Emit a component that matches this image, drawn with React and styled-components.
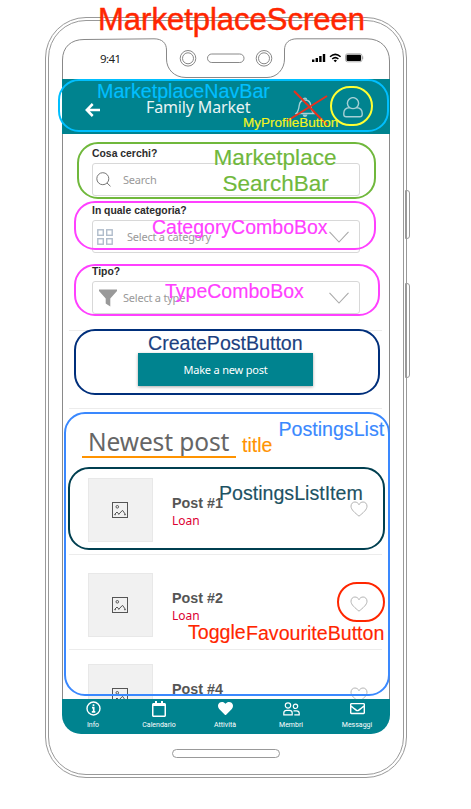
import React from "react";
import styled, { createGlobalStyle } from "styled-components";
import { FaHeart, FaRegCalendar, FaRegEnvelope } from "react-icons/fa";

const TEAL = "#00838f";
const UI = `"Noto Sans", "Open Sans", sans-serif`;
const ARIAL = `"Liberation Sans", Arial, sans-serif`;

const GlobalStyle = createGlobalStyle`
  *, *::before, *::after { box-sizing: border-box; }
  body { margin: 0; background: #fff; font-family: ${UI}; }
  svg { display: block; }
`;

const Page = styled.div`
  position: relative;
  width: 471px;
  height: 809px;
  overflow: hidden;
  padding: 17px 0 0 45px;
`;

const Phone = styled.div`
  position: relative;
  width: 362px;
  height: 761px;
  border: 1px solid #999;
  border-radius: 41px;
  padding: 2px;
`;

const Bezel = styled.div`
  height: 100%;
  border: 1px solid #999;
  border-radius: 38px;
  padding: 17px 0 0 13px;
`;

const SideKey = styled.div`
  position: absolute;
  left: 359px;
  top: ${(p) => p.$top}px;
  width: 5px;
  height: ${(p) => p.$height}px;
  border: 1px solid #999;
  border-radius: 0 3px 3px 0;
`;

const Screen = styled.div`
  width: 328px;
  height: 696px;
  display: flex;
  flex-direction: column;
`;

const StatusBar = styled.div`
  position: relative;
  height: 41px;
  flex: none;
  display: flex;
  justify-content: space-between;
  padding: 14px 26px 0 38px;
`;

const StatusOutline = styled.svg`
  position: absolute;
  left: 0;
  top: 0;
`;

const Clock = styled.span`
  font-size: 11.5px;
  line-height: 14px;
  letter-spacing: -0.6px;
  color: #222;
`;

const StatusIcons = styled.svg`
  margin-top: 1px;
`;

const NavBar = styled.header`
  height: 55px;
  flex: none;
  background: ${TEAL};
  display: flex;
  align-items: center;
  padding: 1px 27px 0 23px;
  color: #fff;
`;

const BackArrow = styled.svg`
  margin-top: 5px;
`;

const NavTitle = styled.h1`
  flex: 1;
  margin: 0 0 0 46px;
  font-size: 16px;
  line-height: 22px;
  font-weight: 400;
  letter-spacing: -0.15px;
  color: #e8f4f5;
`;

const NavActions = styled.div`
  display: flex;
  gap: 28px;
  color: #a5d0d5;
`;

const Content = styled.main`
  height: 565px;
  flex: none;
  overflow: hidden;
  border: solid #8a8a8a;
  border-width: 0 1px;
  padding: 0 7px 0 6px;
`;

const Filters = styled.section`
  height: 196px;
  padding: 14px 22px 0 23px;
`;

const Field = styled.div`
  margin-bottom: ${(p) => p.$gap || 0}px;
`;

const FieldLabel = styled.label`
  display: block;
  font: 700 10.4px/12px ${ARIAL};
  color: #2c2c2c;
  margin-bottom: 3px;
`;

const FieldBox = styled.div`
  height: 33px;
  border: 1px solid #d8d8d8;
  border-radius: 3px;
  display: flex;
  align-items: center;
  padding: 0 10px 0 ${(p) => p.$pad}px;
  gap: ${(p) => p.$gap}px;
  font-size: 11px;
  color: #999;
`;

const Placeholder = styled.span`
  flex: 1;
  line-height: 16px;
  letter-spacing: -0.22px;
`;

const CreateSection = styled.section`
  height: 79px;
  border: solid #ececec;
  border-width: 1px 0;
  padding: 22px 0 0 69px;
`;

const PrimaryButton = styled.button`
  display: block;
  width: 175px;
  height: 33px;
  padding: 0;
  border: 0;
  background: ${TEAL};
  color: #fff;
  font: 400 11px/33px ${UI};
  letter-spacing: -0.2px;
  box-shadow: 0 1px 3px rgba(0, 0, 0, 0.35);
`;

const ListTitle = styled.h2`
  height: 51px;
  margin: 0;
  padding: 16px 0 0 19px;
  font-size: 24.5px;
  line-height: 34px;
  font-weight: 400;
  letter-spacing: -0.1px;
  color: #666;
`;

const Item = styled.article`
  height: ${(p) => p.$height}px;
  border-bottom: 1px solid #ececec;
  padding: ${(p) => p.$top}px 14px 0 19px;
  display: flex;
`;

const Thumb = styled.div`
  width: 65px;
  height: 64px;
  background: #f1f1f1;
  border: 1px solid #e8e8e8;
  display: flex;
  align-items: center;
  justify-content: center;
  padding-right: 1px;
`;

const ItemText = styled.div`
  flex: 1;
  padding: 16px 0 0 19px;
`;

const ItemName = styled.div`
  font: 700 14.3px/18px ${ARIAL};
  color: #555;
`;

const ItemKind = styled.div`
  margin-top: 1px;
  font-size: 12px;
  line-height: 16px;
  color: #dc0032;
`;

const HeartSlot = styled.div`
  padding-top: 23px;
`;

const TabBar = styled.nav`
  height: 35px;
  flex: none;
  background: ${TEAL};
  border-radius: 0 0 19px 19px;
  display: grid;
  grid-template-columns: repeat(5, 62px);
  column-gap: 4px;
  color: #fff;
`;

const Tab = styled.div`
  display: flex;
  flex-direction: column;
  align-items: center;
  font: 400 7px/9px Roboto, sans-serif;
`;

const TabIcon = styled.div`
  height: 19px;
  margin-bottom: 3px;
  display: flex;
  align-items: center;
`;

const HomeBar = styled.div`
  width: 108px;
  height: 9px;
  margin: 15px 0 0 110px;
  border: 1px solid #999;
  border-radius: 5px;
`;

const Outline = styled.div`
  position: absolute;
  left: ${(p) => p.$x}px;
  top: ${(p) => p.$y}px;
  width: ${(p) => p.$w}px;
  height: ${(p) => p.$h}px;
  border: 2px solid ${(p) => p.$color};
  border-radius: 21px;
`;

const Note = styled.div`
  position: absolute;
  left: ${(p) => p.$x}px;
  top: ${(p) => p.$base - 30}px;
  font: 400 ${(p) => p.$size || 19.6}px/40px ${ARIAL};
  height: 40px;
  margin-top: ${(p) => 10 - (p.$size || 19.6) * 0.33}px;
  white-space: nowrap;
  color: ${(p) => p.$color};
  -webkit-text-stroke: ${(p) => (p.$size > 30 ? 0.5 : 0.15)}px ${(p) => p.$color};
`;

const Underline = styled.div`
  position: absolute;
  left: 82px;
  top: 456px;
  width: 154px;
  height: 2px;
  background: #ff9300;
`;

const Cross = styled.svg`
  position: absolute;
  left: 284px;
  top: 88px;
`;

const Chevron = () => (
  <svg width="20" height="12" viewBox="0 0 20 12" fill="none" stroke="#aaa" strokeWidth="1.1">
    <path d="M.5 .8 10 11 19.5 .8" />
  </svg>
);

const HeartOutline = () => (
  <svg width="18" height="16" viewBox="0 0 18 16" fill="none" stroke="#aaa" strokeWidth="0.9">
    <path d="M9 15.2C5 11.8 1 8.8 1 5.2 1 2.7 2.8 1 4.9 1 6.7 1 8.2 2 9 3.7 9.8 2 11.3 1 13.1 1 15.2 1 17 2.7 17 5.2 17 8.8 13 11.8 9 15.2Z" />
  </svg>
);

const PictureIcon = () => (
  <svg width="16" height="16" viewBox="0 0 16 16" fill="none" stroke="#555" strokeWidth="1">
    <rect x=".5" y=".5" width="15" height="15" />
    <circle cx="5.3" cy="4.8" r="1.3" />
    <path d="M2.5 12.5 5 10 7 12.3M6.5 12.5 10.5 8.3 13.5 12.5M2.5 12.7H4M12 12.7H13.7" />
  </svg>
);

const InfoIcon = () => (
  <svg width="15" height="15" viewBox="0 0 15 15" fill="none" stroke="#fff" strokeWidth="1.4">
    <circle cx="7.5" cy="7.5" r="6.5" />
    <path d="M7.5 3.2V5M6 6.7H7.7V10.6M5.800 10.8H9.3" strokeWidth="1.7" />
  </svg>
);

const MembersIcon = () => (
  <svg width="17" height="14" viewBox="0 0 17 14" fill="none" stroke="#fff" strokeWidth="1.2">
    <circle cx="5" cy="3.5" r="2.7" />
    <circle cx="12.5" cy="4.3" r="2.2" />
    <path d="M.8 12.9V11C.8 9.3 2 8.3 3.5 8.3H6.5C8 8.3 9.2 9.3 9.2 11V12.9ZM10.5 8.8H13.5C15.2 8.8 16.2 9.8 16.2 11.3V12.9H11.3" />
  </svg>
);

const POSTS = [
  { name: "Post #1", top: 18, height: 95 },
  { name: "Post #2", top: 18, height: 95 },
  { name: "Post #4", top: 14, height: 95 },
];

const TABS = [
  { label: "Info", icon: <InfoIcon /> },
  { label: "Calendario", icon: <FaRegCalendar size={16} /> },
  { label: "Attività", icon: <FaHeart size={15} /> },
  { label: "Membri", icon: <MembersIcon /> },
  { label: "Messaggi", icon: <FaRegEnvelope size={15} /> },
];

const OUTLINES = [
  [58, 79, 331, 53, "#00bfff"],
  [330, 86, 43, 40, "#ffff33"],
  [77, 142, 299, 57, "#70b83c"],
  [74, 201, 302, 49, "#ff40ff"],
  [74, 264, 306, 52, "#ff40ff"],
  [74, 329, 306, 66, "#002f7b"],
  [64, 412, 326, 284, "#3a88fe"],
  [68, 467, 317, 83, "#003f50"],
  [337, 582, 48, 40, "#ff2600"],
];

const NOTES = [
  ["MarketplaceScreen", 98, 30, "#ff2600", 31],
  ["MarketplaceNavBar", 97, 97.5, "#00bfff", 19.7],
  ["MyProfileButton", 243, 127, "#f5f51e", 13.5],
  ["Marketplace", 213.5, 165.5, "#70b83c", 22.6],
  ["SearchBar", 222.5, 191.5, "#70b83c", 22.5],
  ["CategoryComboBox", 152, 233, "#ff40ff", 19.5],
  ["TypeComboBox", 165, 297, "#ff40ff", 19.5],
  ["CreatePostButton", 148, 349, "#1c3f80"],
  ["PostingsList", 278.5, 435, "#3a88fe"],
  ["title", 242, 451, "#ff9300"],
  ["PostingsListItem", 219, 499, "#1c5263"],
  ["Toggle", 188, 638, "#ff2600"],
  ["FavouriteButton", 246, 639, "#ff2600"],
];

export default function App() {
  return (
    <Page>
      <GlobalStyle />
      <Phone>
        <Bezel>
          <Screen>
            <StatusBar>
              <StatusOutline width="328" height="41" fill="none" stroke="#888" strokeWidth="1">
                <path d="M.5 41V22C.5 9 9 1.5 22 1.5L92 .8C100 .8 104.5 5 104.5 12V21C104.5 31 112 39.5 124 39.5H205C215 39.5 222.5 31 222.5 21V12C222.5 5 227 .8 235 .8H305C319 .8 327.5 10 327.5 23V41" />
                <circle cx="126" cy="20.3" r="7.8" />
                <circle cx="126" cy="20.3" r="5.5" />
                <rect x="145.5" y="16" width="36.5" height="8.5" rx="4.25" />
                <circle cx="202" cy="20.3" r="7.8" />
                <circle cx="202" cy="20.3" r="5.5" />
              </StatusOutline>
              <Clock>9:41</Clock>
              <StatusIcons width="52" height="10" viewBox="0 0 52 10">
                <path d="M0 6.5h2.4V9H0zM3.6 5h2.4v4h-2.4zM7.2 3h2.4v6h-2.4zM10.8 1h2.4v8h-2.4z" />
                <path d="M18 3.7Q23.3-.9 28.6 3.7M20.2 6Q23.3 3.3 26.4 6" fill="none" stroke="#000" strokeWidth="1.5" />
                <path d="M21.6 7.4Q23.3 6 25 7.4L23.3 9.2Z" />
                <rect x="33.5" y=".8" width="16.5" height="8" rx="2" fill="none" stroke="#999" strokeWidth=".8" />
                <rect x="34.5" y="1.7" width="14.5" height="6.2" rx="1" />
                <path d="M50.7 3.4V6.2" stroke="#999" />
              </StatusIcons>
            </StatusBar>
            <NavBar>
              <BackArrow width="15" height="14" viewBox="0 0 15 14" fill="none" stroke="#fff" strokeWidth="2.5">
                <path d="M7.7 1 1.8 7 7.7 13M2 7H15" />
              </BackArrow>
              <NavTitle>Family Market</NavTitle>
              <NavActions>
                <svg width="20" height="21" viewBox="0 0 20 21" fill="none" stroke="currentColor" strokeWidth="1.4">
                  <path d="M1 16.5C3.5 14.5 3.8 12 4.2 8.5 4.6 5 6.5 3 10 3S15.4 5 15.8 8.5C16.2 12 16.5 14.5 19 16.5Z" />
                  <path d="M8.5 2.8C8.5 .6 11.5 .6 11.5 2.8" />
                  <path d="M7.5 17.5H12.5Q12 20 10 20T7.5 17.5Z" fill="currentColor" stroke="none" />
                </svg>
                <svg width="20" height="21" viewBox="0 0 20 21" fill="none" stroke="currentColor" strokeWidth="1.4">
                  <path d="M6.5 10.6A5.6 5.6 0 1 1 13.5 10.6" />
                  <path d="M6.5 10.6C3 10.8 .8 13 .8 16.3V17.5C.8 19 1.8 19.8 3.2 19.8H16.8C18.2 19.8 19.2 19 19.2 17.5V16.3C19.2 13 17 10.8 13.5 10.6Q10 12.6 6.5 10.6Z" />
                </svg>
              </NavActions>
            </NavBar>
            <Content>
              <Filters>
                <Field $gap={9}>
                  <FieldLabel>Cosa cerchi?</FieldLabel>
                  <FieldBox $pad={3} $gap={12}>
                    <svg width="15" height="15" viewBox="0 0 15 15" fill="none" stroke="#777" strokeWidth="1">
                      <circle cx="6.8" cy="6.7" r="6" />
                      <path d="M11 11 14.5 14.3" />
                    </svg>
                    <Placeholder>Search</Placeholder>
                  </FieldBox>
                </Field>
                <Field $gap={13}>
                  <FieldLabel>In quale categoria?</FieldLabel>
                  <FieldBox $pad={4} $gap={14}>
                    <svg width="16" height="16" viewBox="0 0 16 16" fill="none" stroke="#b0bccb" strokeWidth="1.4">
                      <rect x=".8" y=".8" width="5.5" height="5.5" />
                      <rect x="9.7" y=".8" width="5.5" height="5.5" />
                      <rect x=".8" y="9.7" width="5.5" height="5.5" />
                      <rect x="9.7" y="9.7" width="5.5" height="5.5" />
                    </svg>
                    <Placeholder>Select a category</Placeholder>
                    <Chevron />
                  </FieldBox>
                </Field>
                <Field>
                  <FieldLabel>Tipo?</FieldLabel>
                  <FieldBox $pad={6} $gap={6}>
                    <svg width="18" height="18" viewBox="0 0 18 18" fill="#999">
                      <path d="M0 .5H18V2L11.3 9.5V17.5L6.7 14.5V9.5L0 2Z" />
                    </svg>
                    <Placeholder>Select a type</Placeholder>
                    <Chevron />
                  </FieldBox>
                </Field>
              </Filters>
              <CreateSection>
                <PrimaryButton>Make a new post</PrimaryButton>
              </CreateSection>
              <ListTitle>Newest post</ListTitle>
              {POSTS.map((post) => (
                <Item key={post.name} $top={post.top} $height={post.height}>
                  <Thumb>
                    <PictureIcon />
                  </Thumb>
                  <ItemText>
                    <ItemName>{post.name}</ItemName>
                    <ItemKind>Loan</ItemKind>
                  </ItemText>
                  <HeartSlot>
                    <HeartOutline />
                  </HeartSlot>
                </Item>
              ))}
            </Content>
            <TabBar>
              {TABS.map((tab) => (
                <Tab key={tab.label}>
                  <TabIcon>{tab.icon}</TabIcon>
                  {tab.label}
                </Tab>
              ))}
            </TabBar>
          </Screen>
          <HomeBar />
        </Bezel>
        <SideKey $top={172} $height={49} />
        <SideKey $top={265} $height={95} />
      </Phone>

      {OUTLINES.map(([x, y, w, h, color]) => (
        <Outline key={`${x}-${y}`} $x={x} $y={y} $w={w} $h={h} $color={color} />
      ))}
      <Underline />
      <Cross width="48" height="40" fill="none" stroke="#e8301c" strokeWidth="2">
        <path d="M10 3 43 37M43 8 3 33" />
      </Cross>
      {NOTES.map(([text, x, base, color, size]) => (
        <Note key={text} $x={x} $base={base} $color={color} $size={size}>
          {text}
        </Note>
      ))}
    </Page>
  );
}
